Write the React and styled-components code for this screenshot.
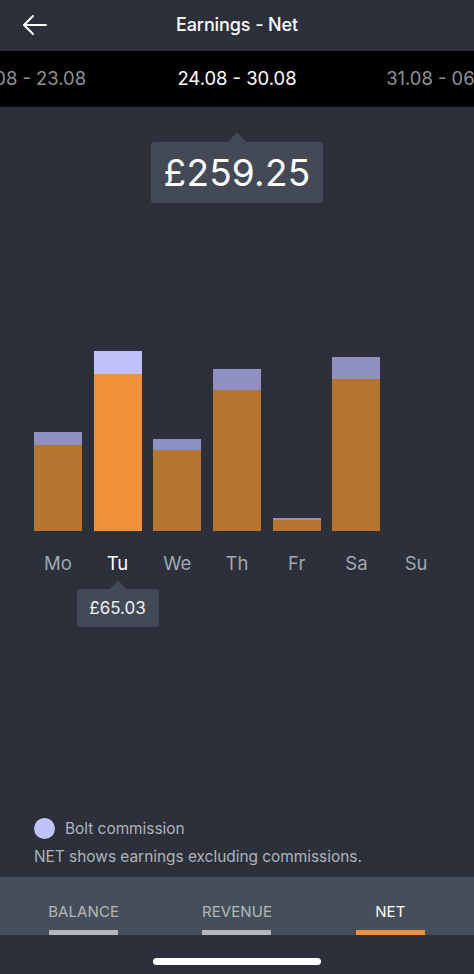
import React from "react";
import styled, { createGlobalStyle } from "styled-components";

const Global = createGlobalStyle`
  html, body { margin: 0; padding: 0; background: #2b303a; }
  body { font-family: Inter, "Noto Sans", "Liberation Sans", sans-serif; -webkit-font-smoothing: antialiased; }
  * { box-sizing: border-box; }
`;

const Screen = styled.div`
  width: 474px;
  height: 974px;
  background: #2b303a;
  display: flex;
  flex-direction: column;
  overflow: hidden;
  color: #fff;
`;

const Header = styled.div`
  height: 51px;
  display: grid;
  grid-template-columns: 60px 1fr 60px;
  align-items: center;
  padding-bottom: 2px;
`;

const BackButton = styled.div`
  display: flex;
  align-items: center;
  padding-left: 22px;
  padding-top: 1px;
`;

const Title = styled.div`
  text-align: center;
  font-size: 18px;
  font-weight: 500;
  letter-spacing: -0.1px;
`;

const WeekBar = styled.div`
  height: 56px;
  background: #000;
  display: flex;
  justify-content: center;
  align-items: center;
  overflow: hidden;
`;

const Week = styled.div`
  flex: 0 0 207px;
  text-align: center;
  font-size: 18.4px;
  color: ${(p) => (p.$active ? "#ffffff" : "#8f9196")};
  white-space: nowrap;
  padding-bottom: 2px;
`;

const Main = styled.div`
  flex: 1;
  display: flex;
  flex-direction: column;
  align-items: center;
  padding-top: 25px;
`;

const Bubble = styled.div`
  display: flex;
  flex-direction: column;
  align-items: center;
`;

const Pointer = styled.div`
  width: 0;
  height: 0;
  border-left: ${(p) => p.$size}px solid transparent;
  border-right: ${(p) => p.$size}px solid transparent;
  border-bottom: ${(p) => p.$size + 1}px solid #434a55;
`;

const BigBox = styled.div`
  width: 172px;
  height: 61px;
  background: #434a55;
  border-radius: 3px;
  display: flex;
  align-items: center;
  justify-content: center;
  font-size: 37px;
  font-weight: 400;
  letter-spacing: 0.2px;
  padding-bottom: 1px;
`;

const SmallBox = styled.div`
  width: 82px;
  height: 38px;
  background: #434a55;
  border-radius: 3px;
  display: flex;
  align-items: center;
  justify-content: center;
  font-size: 17px;
  color: #eef0f2;
`;

const Grid = styled.div`
  width: 100%;
  padding: 0 28px;
  display: grid;
  grid-template-columns: repeat(7, minmax(0, 1fr));
`;

const ChartGrid = styled(Grid)`
  height: 328px;
  align-items: end;
`;

const BarCol = styled.div`
  display: flex;
  justify-content: center;
  align-items: flex-end;
  height: 100%;
`;

const Bar = styled.div`
  width: 48px;
  display: flex;
  flex-direction: column;
`;

const Commission = styled.div`
  background: ${(p) => (p.$active ? "#c2c2fb" : "#8f90c0")};
`;

const Net = styled.div`
  background: ${(p) => (p.$active ? "#f0913a" : "#b6752f")};
`;

const LabelGrid = styled(Grid)`
  margin-top: 20px;
  align-items: start;
`;

const DayCell = styled.div`
  display: flex;
  flex-direction: column;
  align-items: center;
`;

const DayLabel = styled.div`
  height: 24px;
  line-height: 24px;
  font-size: 18.5px;
  color: ${(p) => (p.$active ? "#ffffff" : "#a3a7ae")};
  font-weight: 400;
`;

const SmallBubble = styled(Bubble)`
  margin-top: 5px;
`;

const Legend = styled.div`
  padding: 0 34px 10px;
  display: flex;
  flex-direction: column;
  gap: 8px;
`;

const LegendRow = styled.div`
  display: flex;
  align-items: center;
  gap: 10px;
  height: 21px;
`;

const Dot = styled.span`
  width: 21px;
  height: 21px;
  border-radius: 50%;
  background: #c2c2fb;
`;

const LegendText = styled.div`
  font-size: 15.4px;
  line-height: 20px;
  color: #b0b4ba;
`;

const TabBar = styled.div`
  height: 58px;
  background: #464e59;
  display: grid;
  grid-template-columns: repeat(3, 1fr);
  padding: 0 7px;
`;

const Tab = styled.div`
  display: flex;
  flex-direction: column;
  align-items: center;
  justify-content: flex-end;
  gap: 8px;
`;

const TabLabel = styled.div`
  font-size: 15px;
  line-height: 20px;
  letter-spacing: 0.1px;
  color: ${(p) => (p.$active ? "#ffffff" : "#b3b7bd")};
`;

const Indicator = styled.div`
  width: 69px;
  height: 5px;
  background: ${(p) => (p.$active ? "#f0913a" : "#b3b7bd")};
`;

const HomeArea = styled.div`
  height: 39px;
  display: flex;
  justify-content: center;
  padding-top: 23px;
`;

const HomePill = styled.div`
  width: 168px;
  height: 7px;
  border-radius: 4px;
  background: #ffffff;
`;

const days = [
  { d: "Mo", total: 99, net: 86 },
  { d: "Tu", total: 180, net: 157, active: true },
  { d: "We", total: 92, net: 81 },
  { d: "Th", total: 162, net: 141 },
  { d: "Fr", total: 13, net: 11 },
  { d: "Sa", total: 174, net: 152 },
  { d: "Su", total: 0, net: 0 },
];

const BackArrow = () => (
  <svg width="25" height="22" viewBox="0 0 25 22" fill="none">
    <path d="M24 11H2" stroke="#fff" strokeWidth="2" strokeLinecap="round" />
    <path d="M11 2L2 11L11 20" stroke="#fff" strokeWidth="2" strokeLinecap="round" strokeLinejoin="round" />
  </svg>
);

export default function App() {
  return (
    <>
      <Global />
      <Screen>
        <Header>
          <BackButton>
            <BackArrow />
          </BackButton>
          <Title>Earnings - Net</Title>
          <div />
        </Header>
        <WeekBar>
          <Week>17.08 - 23.08</Week>
          <Week $active>24.08 - 30.08</Week>
          <Week>31.08 - 06.09</Week>
        </WeekBar>
        <Main>
          <Bubble>
            <Pointer $size={9} />
            <BigBox>£259.25</BigBox>
          </Bubble>
          <ChartGrid>
            {days.map((x) => (
              <BarCol key={x.d}>
                {x.total > 0 && (
                  <Bar>
                    <Commission $active={x.active} style={{ height: x.total - x.net }} />
                    <Net $active={x.active} style={{ height: x.net }} />
                  </Bar>
                )}
              </BarCol>
            ))}
          </ChartGrid>
          <LabelGrid>
            {days.map((x) => (
              <DayCell key={x.d}>
                <DayLabel $active={x.active}>{x.d}</DayLabel>
                {x.active && (
                  <SmallBubble>
                    <Pointer $size={8} />
                    <SmallBox>£65.03</SmallBox>
                  </SmallBubble>
                )}
              </DayCell>
            ))}
          </LabelGrid>
        </Main>
        <Legend>
          <LegendRow>
            <Dot />
            <LegendText>Bolt commission</LegendText>
          </LegendRow>
          <LegendText>NET shows earnings excluding commissions.</LegendText>
        </Legend>
        <TabBar>
          <Tab>
            <TabLabel>BALANCE</TabLabel>
            <Indicator />
          </Tab>
          <Tab>
            <TabLabel>REVENUE</TabLabel>
            <Indicator />
          </Tab>
          <Tab>
            <TabLabel $active>NET</TabLabel>
            <Indicator $active />
          </Tab>
        </TabBar>
        <HomeArea>
          <HomePill />
        </HomeArea>
      </Screen>
    </>
  );
}
